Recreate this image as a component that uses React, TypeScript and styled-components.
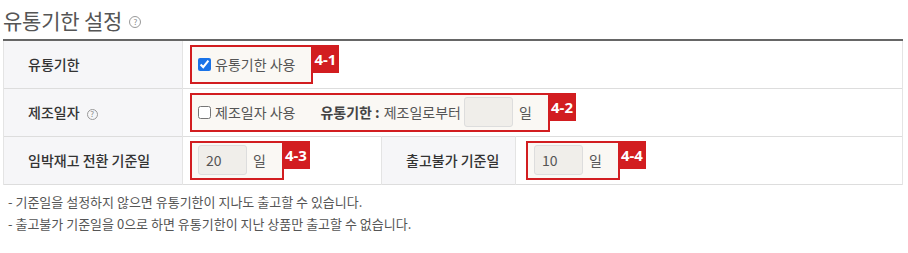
import React from 'react'
import styled, { createGlobalStyle } from 'styled-components'

const GlobalStyle = createGlobalStyle`
  body {
    margin: 0;
    background: #fff;
    font-family: "Noto Sans CJK KR", "Noto Sans", sans-serif;
    color: #555;
  }
`

const Page = styled.div`
  padding: 0 5px 0 3px;
`

const Title = styled.h2`
  margin: 0;
  height: 39px;
  display: flex;
  align-items: center;
  gap: 7px;
  font-size: 21px;
  font-weight: 400;
  color: #555;
  letter-spacing: -0.2px;
`

const Help = styled.span<{ $size?: number }>`
  display: inline-flex;
  align-items: center;
  justify-content: center;
  width: ${(p) => p.$size || 12}px;
  height: ${(p) => p.$size || 12}px;
  border: 1px solid #999;
  border-radius: 50%;
  font-size: 8px;
  font-weight: 400;
  line-height: 1;
  color: #888;
  box-sizing: border-box;
  margin-top: 4px;
`

const Table = styled.table`
  width: 900px;
  border-collapse: collapse;
  table-layout: fixed;
  border-top: 2px solid #666;
`

const Row = styled.tr`
  height: 48px;
  border-bottom: 1px solid #ddd;
`

const Label = styled.th`
  background: #f6f6f8;
  text-align: left;
  padding: 0 0 0 24px;
  font-size: 14px;
  font-weight: 500;
  color: #333;
  border-right: 1px solid #e4e4e4;
  border-left: 1px solid #e4e4e4;
`

const LabelInner = styled.span`
  display: inline-flex;
  align-items: center;
  gap: 7px;
`

const Cell = styled.td<{ $pl?: number }>`
  padding: 0 0 0 ${(p) => p.$pl ?? 7}px;
  font-size: 14px;
  color: #555;
  border-right: 1px solid #e4e4e4;
`

const Marked = styled.div`
  position: relative;
  display: inline-flex;
  align-items: center;
  height: 35px;
  padding: 0 16px 0 6px;
  border: 2px solid #d21d20;
  background: #faf8f4;
`

const Tag = styled.span`
  position: absolute;
  left: 100%;
  top: -2px;
  width: 28px;
  height: 28px;
  background: #d21d20;
  color: #fff;
  font-size: 15px;
  font-weight: 700;
  display: flex;
  align-items: center;
  justify-content: center;
  font-family: "Noto Sans", "Noto Sans CJK KR", sans-serif;
`

const Check = styled.label`
  display: inline-flex;
  align-items: center;
  gap: 4px;
  color: #555;
  input {
    margin: 0;
    width: 13px;
    height: 13px;
    accent-color: #1a73e8;
  }
`

const Strong = styled.span`
  font-weight: 700;
  color: #444;
  margin: 0 4px 0 25px;
`

const NumBox = styled.input`
  width: 49px;
  height: 30px;
  box-sizing: border-box;
  border: 1px solid #ddd;
  border-radius: 3px;
  background: #f0eeea;
  padding: 0 7px;
  font-size: 14px;
  color: #555;
  font-family: inherit;
  margin-right: 6px;
  &:focus { outline: none; }
`

const Notes = styled.ul`
  list-style: none;
  margin: 6px 0 0;
  padding: 0 0 0 5px;
  font-size: 13px;
  color: #555;
  li {
    line-height: 22px;
  }
`

export default function App() {
  return (
    <>
      <GlobalStyle />
      <Page>
        <Title>
          유통기한 설정 <Help>?</Help>
        </Title>
        <Table>
          <colgroup>
            <col style={{ width: 179 }} />
            <col style={{ width: 199 }} />
            <col style={{ width: 134 }} />
            <col />
          </colgroup>
          <tbody>
            <Row>
              <Label>유통기한</Label>
              <Cell colSpan={3}>
                <Marked>
                  <Check>
                    <input type="checkbox" defaultChecked />
                    유통기한 사용
                  </Check>
                  <Tag>4-1</Tag>
                </Marked>
              </Cell>
            </Row>
            <Row>
              <Label>
                <LabelInner>
                  제조일자 <Help $size={11}>?</Help>
                </LabelInner>
              </Label>
              <Cell colSpan={3}>
                <Marked>
                  <Check>
                    <input type="checkbox" />
                    제조일자 사용
                  </Check>
                  <Strong>유통기한 :</Strong>
                  제조일로부터&nbsp;
                  <NumBox defaultValue="" />
                  일
                  <Tag>4-2</Tag>
                </Marked>
              </Cell>
            </Row>
            <Row>
              <Label>임박재고 전환 기준일</Label>
              <Cell>
                <Marked>
                  <NumBox defaultValue="20" />
                  일
                  <Tag>4-3</Tag>
                </Marked>
              </Cell>
              <Label>출고불가 기준일</Label>
              <Cell $pl={10}>
                <Marked>
                  <NumBox defaultValue="10" />
                  일
                  <Tag>4-4</Tag>
                </Marked>
              </Cell>
            </Row>
          </tbody>
        </Table>
        <Notes>
          <li>- 기준일을 설정하지 않으면 유통기한이 지나도 출고할 수 있습니다.</li>
          <li>- 출고불가 기준일을 0으로 하면 유통기한이 지난 상품만 출고할 수 없습니다.</li>
        </Notes>
      </Page>
    </>
  )
}
